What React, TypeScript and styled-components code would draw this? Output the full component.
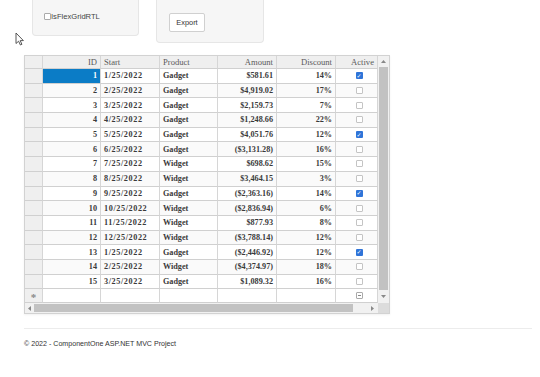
import { FC } from "react";
import styled, { createGlobalStyle } from "styled-components";

type Row = {
	id: number;
	start: string;
	product: string;
	amount: string;
	discount: string;
	active: boolean;
};

const rows: Row[] = [
	{ id: 1, start: "1/25/2022", product: "Gadget", amount: "$581.61", discount: "14%", active: true },
	{ id: 2, start: "2/25/2022", product: "Gadget", amount: "$4,919.02", discount: "17%", active: false },
	{ id: 3, start: "3/25/2022", product: "Gadget", amount: "$2,159.73", discount: "7%", active: false },
	{ id: 4, start: "4/25/2022", product: "Gadget", amount: "$1,248.66", discount: "22%", active: false },
	{ id: 5, start: "5/25/2022", product: "Gadget", amount: "$4,051.76", discount: "12%", active: true },
	{ id: 6, start: "6/25/2022", product: "Gadget", amount: "($3,131.28)", discount: "16%", active: false },
	{ id: 7, start: "7/25/2022", product: "Widget", amount: "$698.62", discount: "15%", active: false },
	{ id: 8, start: "8/25/2022", product: "Widget", amount: "$3,464.15", discount: "3%", active: false },
	{ id: 9, start: "9/25/2022", product: "Gadget", amount: "($2,363.16)", discount: "14%", active: true },
	{ id: 10, start: "10/25/2022", product: "Widget", amount: "($2,836.94)", discount: "6%", active: false },
	{ id: 11, start: "11/25/2022", product: "Widget", amount: "$877.93", discount: "8%", active: false },
	{ id: 12, start: "12/25/2022", product: "Widget", amount: "($3,788.14)", discount: "12%", active: false },
	{ id: 13, start: "1/25/2022", product: "Gadget", amount: "($2,446.92)", discount: "12%", active: true },
	{ id: 14, start: "2/25/2022", product: "Widget", amount: "($4,374.97)", discount: "18%", active: false },
	{ id: 15, start: "3/25/2022", product: "Gadget", amount: "$1,089.32", discount: "16%", active: false },
];

const GlobalStyle = createGlobalStyle`
	body {
		margin: 0;
		background: #ffffff;
		font-family: "Liberation Sans", Arial, sans-serif;
	}
`;

const Pointer: FC = () => (
	<CursorWrap>
		<svg width='9' height='14' viewBox='0 0 9 14'>
			<path
				d='M1 1 L1 11.5 L3.6 9.2 L5.4 13 L6.9 12.3 L5.2 8.6 L8.4 8.6 Z'
				fill='#fff'
				stroke='#444'
				strokeWidth='0.9'
				strokeLinejoin='round'
			/>
		</svg>
	</CursorWrap>
);

const Arrow: FC<{ dir: "up" | "down" | "left" | "right" }> = ({ dir }) => {
	const pts = {
		up: "0,3 2.5,0 5,3",
		down: "0,0 5,0 2.5,3",
		left: "3,0 3,5 0,2.5",
		right: "0,0 0,5 3,2.5",
	}[dir];
	const vertical = dir === "up" || dir === "down";
	return (
		<svg width={vertical ? 5 : 3} height={vertical ? 3 : 5}>
			<polygon points={pts} fill='#888' />
		</svg>
	);
};

const App: FC = () => {
	return (
		<>
			<GlobalStyle />
			<Page>
				<Pointer />
				<Toolbar>
					<OptionPanel>
						<CheckLabel>
							<SmallBox />
							IsFlexGridRTL
						</CheckLabel>
					</OptionPanel>
					<ActionPanel>
						<ExportButton>Export</ExportButton>
					</ActionPanel>
				</Toolbar>

				<GridFrame>
					<GridBody>
						<Sheet>
							<CornerCell />
							<HeadCell $align='right'>ID</HeadCell>
							<HeadCell $align='left'>Start</HeadCell>
							<HeadCell $align='left'>Product</HeadCell>
							<HeadCell $align='right'>Amount</HeadCell>
							<HeadCell $align='right'>Discount</HeadCell>
							<HeadCell $align='right'>Active</HeadCell>

							{rows.map((r, i) => (
								<RowGroup key={r.id} row={r} alt={i % 2 === 1} />
							))}

							<RowHeader>*</RowHeader>
							<Cell $align='right' />
							<Cell $align='left' />
							<Cell $align='left' />
							<Cell $align='right' />
							<Cell $align='right' />
							<Cell $align='center'>
								<MixedBox />
							</Cell>
						</Sheet>
						<VScroll>
							<ScrollBtn $h={11}>
								<Arrow dir='up' />
							</ScrollBtn>
							<VThumb />
							<ScrollBtn $h={13}>
								<Arrow dir='down' />
							</ScrollBtn>
						</VScroll>
					</GridBody>
					<HScroll>
						<HBtn $w={9}>
							<Arrow dir='left' />
						</HBtn>
						<HThumb />
						<HTrack />
						<HBtn $w={12}>
							<Arrow dir='right' />
						</HBtn>
						<ScrollCorner />
					</HScroll>
				</GridFrame>

				<Footer>
					<p>© 2022 - ComponentOne ASP.NET MVC Project</p>
				</Footer>
			</Page>
		</>
	);
};

const RowGroup: FC<{ row: Row; alt: boolean }> = ({ row, alt }) => (
	<>
		<RowHeader />
		<Cell $align='right' $alt={alt} $selected={row.id === 1}>
			{row.id}
		</Cell>
		<Cell $align='left' $alt={alt} $date>
			{row.start}
		</Cell>
		<Cell $align='left' $alt={alt}>
			{row.product}
		</Cell>
		<Cell $align='right' $alt={alt}>
			{row.amount}
		</Cell>
		<Cell $align='right' $alt={alt}>
			{row.discount}
		</Cell>
		<Cell $align='center' $alt={alt}>
			{row.active ? <CheckedBox>✓</CheckedBox> : <EmptyBox />}
		</Cell>
	</>
);

export default App;

const Page = styled.div`
	position: relative;
	width: 540px;
	min-height: 377px;
`;

const CursorWrap = styled.div`
	position: absolute;
	left: 15px;
	top: 32px;
	line-height: 0;
`;

const Toolbar = styled.div`
	display: flex;
	align-items: flex-start;
	gap: 17px;
	padding-left: 32px;
	height: 43px;
`;

const Panel = styled.div`
	box-sizing: border-box;
	background: #f6f6f6;
	border: 1px solid #e6e6e6;
	border-top: none;
	border-radius: 0 0 4px 4px;
`;

const OptionPanel = styled(Panel)`
	width: 107px;
	height: 36px;
	padding: 12px 0 0 11px;
`;

const ActionPanel = styled(Panel)`
	width: 108px;
	height: 43px;
	padding: 11px 0 0 12px;
`;

const CheckLabel = styled.label`
	display: flex;
	align-items: center;
	font-size: 7.6px;
	color: #444;
	line-height: 9px;
`;

const SmallBox = styled.span`
	display: inline-block;
	box-sizing: border-box;
	width: 7px;
	height: 7px;
	border: 1px solid #aaa;
	border-radius: 1px;
	background: #fff;
`;

const ExportButton = styled.button`
	box-sizing: border-box;
	width: 36px;
	height: 19px;
	padding: 0;
	font-family: "Liberation Sans", Arial, sans-serif;
	font-size: 7.4px;
	color: #333;
	background: #ffffff;
	border: 1px solid #d0d0d0;
	border-radius: 2px;
`;

const GridFrame = styled.div`
	box-sizing: border-box;
	margin: 12px 0 0 24px;
	width: 366px;
	border: 1px solid #d2d2d2;
	box-shadow: 0 1px 2px rgba(0, 0, 0, 0.06);
`;

const GridBody = styled.div`
	display: flex;
`;

const Sheet = styled.div`
	display: grid;
	grid-template-columns: 18px 58px 59px 58px 59px 59px 42px;
	grid-template-rows: 13px repeat(15, 14.7px) 14px;
	width: 353px;
`;

const BaseCell = styled.div`
	box-sizing: border-box;
	display: flex;
	align-items: center;
	overflow: hidden;
	white-space: nowrap;
	border-right: 1px solid #d6d6d6;
	border-bottom: 1px solid #d0d0d0;
	font-family: "Liberation Serif", "Times New Roman", serif;
`;

const CornerCell = styled(BaseCell)`
	background: #efefef;
`;

const HeadCell = styled(BaseCell)<{ $align: "left" | "right" }>`
	justify-content: ${(p) => (p.$align === "right" ? "flex-end" : "flex-start")};
	padding: 0 3px;
	background: #efefef;
	color: #5a5a5a;
	font-size: 8.6px;
`;

const RowHeader = styled(BaseCell)`
	justify-content: center;
	background: #efefef;
	color: #888;
	font-size: 11px;
	font-weight: bold;
	padding-top: 3px;
`;

const Cell = styled(BaseCell)<{
	$align: "left" | "right" | "center";
	$alt?: boolean;
	$selected?: boolean;
	$date?: boolean;
}>`
	justify-content: ${(p) =>
		p.$align === "right" ? "flex-end" : p.$align === "center" ? "center" : "flex-start"};
	padding: ${(p) => (p.$align === "center" ? "0 0 0 5px" : "0 3px")};
	background: ${(p) => (p.$selected ? "#0b7cc6" : p.$alt ? "#fafafa" : "#ffffff")};
	color: ${(p) => (p.$selected ? "#ffffff" : "#3a3a3a")};
	font-size: 8.2px;
	font-weight: bold;
	letter-spacing: ${(p) => (p.$date ? "0.6px" : "0")};
`;

const BoxBase = styled.span`
	box-sizing: border-box;
	display: inline-flex;
	align-items: center;
	justify-content: center;
	width: 7px;
	height: 7px;
	border-radius: 1px;
`;

const CheckedBox = styled(BoxBase)`
	background: #2f74d8;
	color: #fff;
	font-family: "DejaVu Sans", sans-serif;
	font-size: 6px;
	line-height: 1;
`;

const EmptyBox = styled(BoxBase)`
	border: 1px solid #c4c4c4;
	background: #fff;
`;

const MixedBox = styled(BoxBase)`
	border: 1px solid #aaa;
	background: #fff;

	&::after {
		content: "";
		width: 3px;
		height: 1px;
		background: #888;
	}
`;

const VScroll = styled.div`
	display: flex;
	flex-direction: column;
	width: 11px;
	background: #f1f1f1;
`;

const ScrollBtn = styled.div<{ $h: number }>`
	display: flex;
	align-items: center;
	justify-content: center;
	height: ${(p) => p.$h}px;
`;

const VThumb = styled.div`
	flex: 1;
	margin: 0 1px;
	background: #c2c2c2;
`;

const HScroll = styled.div`
	display: flex;
	height: 10px;
	background: #f1f1f1;
`;

const HBtn = styled.div<{ $w: number }>`
	display: flex;
	align-items: center;
	justify-content: center;
	width: ${(p) => p.$w}px;
`;

const HThumb = styled.div`
	width: 319px;
	margin: 1px 0;
	background: #c2c2c2;
`;

const HTrack = styled.div`
	flex: 1;
`;

const ScrollCorner = styled.div`
	width: 11px;
	background: #dcdcdc;
`;

const Footer = styled.footer`
	margin: 14px 8px 0 24px;
	border-top: 1px solid #ececec;

	p {
		margin: 11px 0 0;
		font-size: 7.1px;
		color: #333;
	}
`;
